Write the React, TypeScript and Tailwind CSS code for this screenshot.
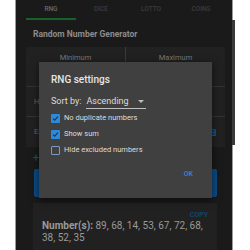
const tabs = ['RNG', 'DICE', 'LOTTO', 'COINS'];

const Check = ({ checked, label }: { checked: boolean; label: string }) => (
  <div className="h-[16px] flex items-center">
    {checked ? (
      <span className="w-[9px] h-[9px] rounded-[1px] bg-[#2a8ae0] flex items-center justify-center">
        <svg width="7" height="7" viewBox="0 0 8 8">
          <path d="M1.2 4.2 L3.1 6 L6.8 1.8" fill="none" stroke="#303030" strokeWidth="1.3" />
        </svg>
      </span>
    ) : (
      <span className="w-[9px] h-[9px] rounded-[1px] border border-[#7d9cbd]" />
    )}
    <span className="ml-[4px] text-[7.5px] leading-[10px] text-[#dcdcdc]">{label}</span>
  </div>
);

const App = () => {
  return (
    <div className="relative w-[250px] h-[250px] bg-white overflow-hidden" style={{ fontFamily: 'Roboto, "Liberation Sans", sans-serif' }}>
      {/* Phone body */}
      <div className="relative ml-[15px] w-[218px] h-[250px] bg-[#1a1a1a] border-l border-r border-[#9a9a9a]">
        {/* side button */}
        <div className="absolute left-full top-[20px] w-[3px] h-[125px] bg-[#3a3a3a]" />

        <div className="ml-[10px] w-[200px]">
          {/* Tabs */}
          <div className="flex h-[20px]">
            {tabs.map((t, i) => (
              <div key={t} className={`w-[50px] flex items-center justify-center text-[6.5px] font-medium ${i === 0 ? 'text-[#6a6a6a] border-b-2 border-[#16602a]' : 'text-[#3c3c3c]'}`}>
                <span className={i === 0 ? 'mt-[2px]' : ''}>{t}</span>
              </div>
            ))}
          </div>

          {/* Title */}
          <div className="pt-[8px] pl-[7px] h-[27px] text-[8.5px] leading-[12px] font-bold text-[#8c8c8c]">Random Number Generator</div>

          {/* Inputs card */}
          <div className="w-[199px] bg-[#212121]">
            <div className="flex h-[40px] border-b border-[#333]">
              <div className="flex-1 pt-[6px] text-center text-[7.5px] leading-[10px] text-[#7a7a7a] border-r border-[#3a3a3a]">Minimum</div>
              <div className="flex-1 pt-[6px] text-center text-[7.5px] leading-[10px] text-[#7a7a7a]">Maximum</div>
            </div>
            <div className="h-[30px] flex items-center pl-[8px] text-[7.5px] text-[#6a6a6a] border-b border-[#333]">How many numbers</div>
            <div className="h-[30px] flex items-center justify-between pl-[8px] pr-[8px] text-[7.5px] text-[#6a6a6a]">
              <span>Excluded numbers</span>
              <svg width="9" height="9" viewBox="0 0 10 10">
                <path d="M2 2 H8 V5 H3 M8 5 V8 H2" fill="none" stroke="#0f5a9a" strokeWidth="1.5" />
              </svg>
            </div>
          </div>

          {/* Options row */}
          <div className="h-[22px] flex items-center pl-[7px] text-[11px] text-[#0f5a9a]">+</div>

          {/* Generate button */}
          <div className="ml-[8px] w-[183px] h-[28px] rounded-[2px] bg-[#0c4c86]" />

          {/* Result card */}
          <div className="mt-[6px] ml-[7px] w-[184px] h-[60px] bg-[#212121] px-[9px] pt-[8px]">
            <div className="text-right text-[7px] leading-[8px] text-[#0f4a7a] font-medium">COPY</div>
            <div className="mt-[1px] text-[10px] leading-[12px] text-[#9a9a9a]">
              <span className="font-bold">Number(s):</span> 89, 68, 14, 53, 67, 72, 68, 38, 52, 35
            </div>
          </div>
        </div>
      </div>

      {/* Dialog */}
      <div className="absolute left-[39px] top-[62px] w-[173px] h-[136px] bg-[#404040] shadow-[0_2px_8px_rgba(0,0,0,0.6)] pl-[12px] pt-[12px]">
        <div className="text-[10px] leading-[12px] font-medium text-[#e6e6e6]">RNG settings</div>
        <div className="mt-[9px] h-[14px] flex items-center text-[9px] text-[#dcdcdc]">
          <span>Sort by:</span>
          <div className="ml-[5px] w-[60px] h-[14px] flex items-center justify-between border-b border-[#bdbdbd]">
            <span>Ascending</span>
            <svg width="6" height="4" viewBox="0 0 6 4" className="mr-[2px]">
              <path d="M0 0 H6 L3 3 Z" fill="#bdbdbd" />
            </svg>
          </div>
        </div>
        <div className="mt-[1px]">
          <Check checked label="No duplicate numbers" />
          <Check checked label="Show sum" />
          <Check checked={false} label="Hide excluded numbers" />
        </div>
        <div className="mt-[11px] pr-[19px] flex justify-end text-[7px] font-medium text-[#2a8ae0]">OK</div>
      </div>
    </div>
  );
};

export default App;
